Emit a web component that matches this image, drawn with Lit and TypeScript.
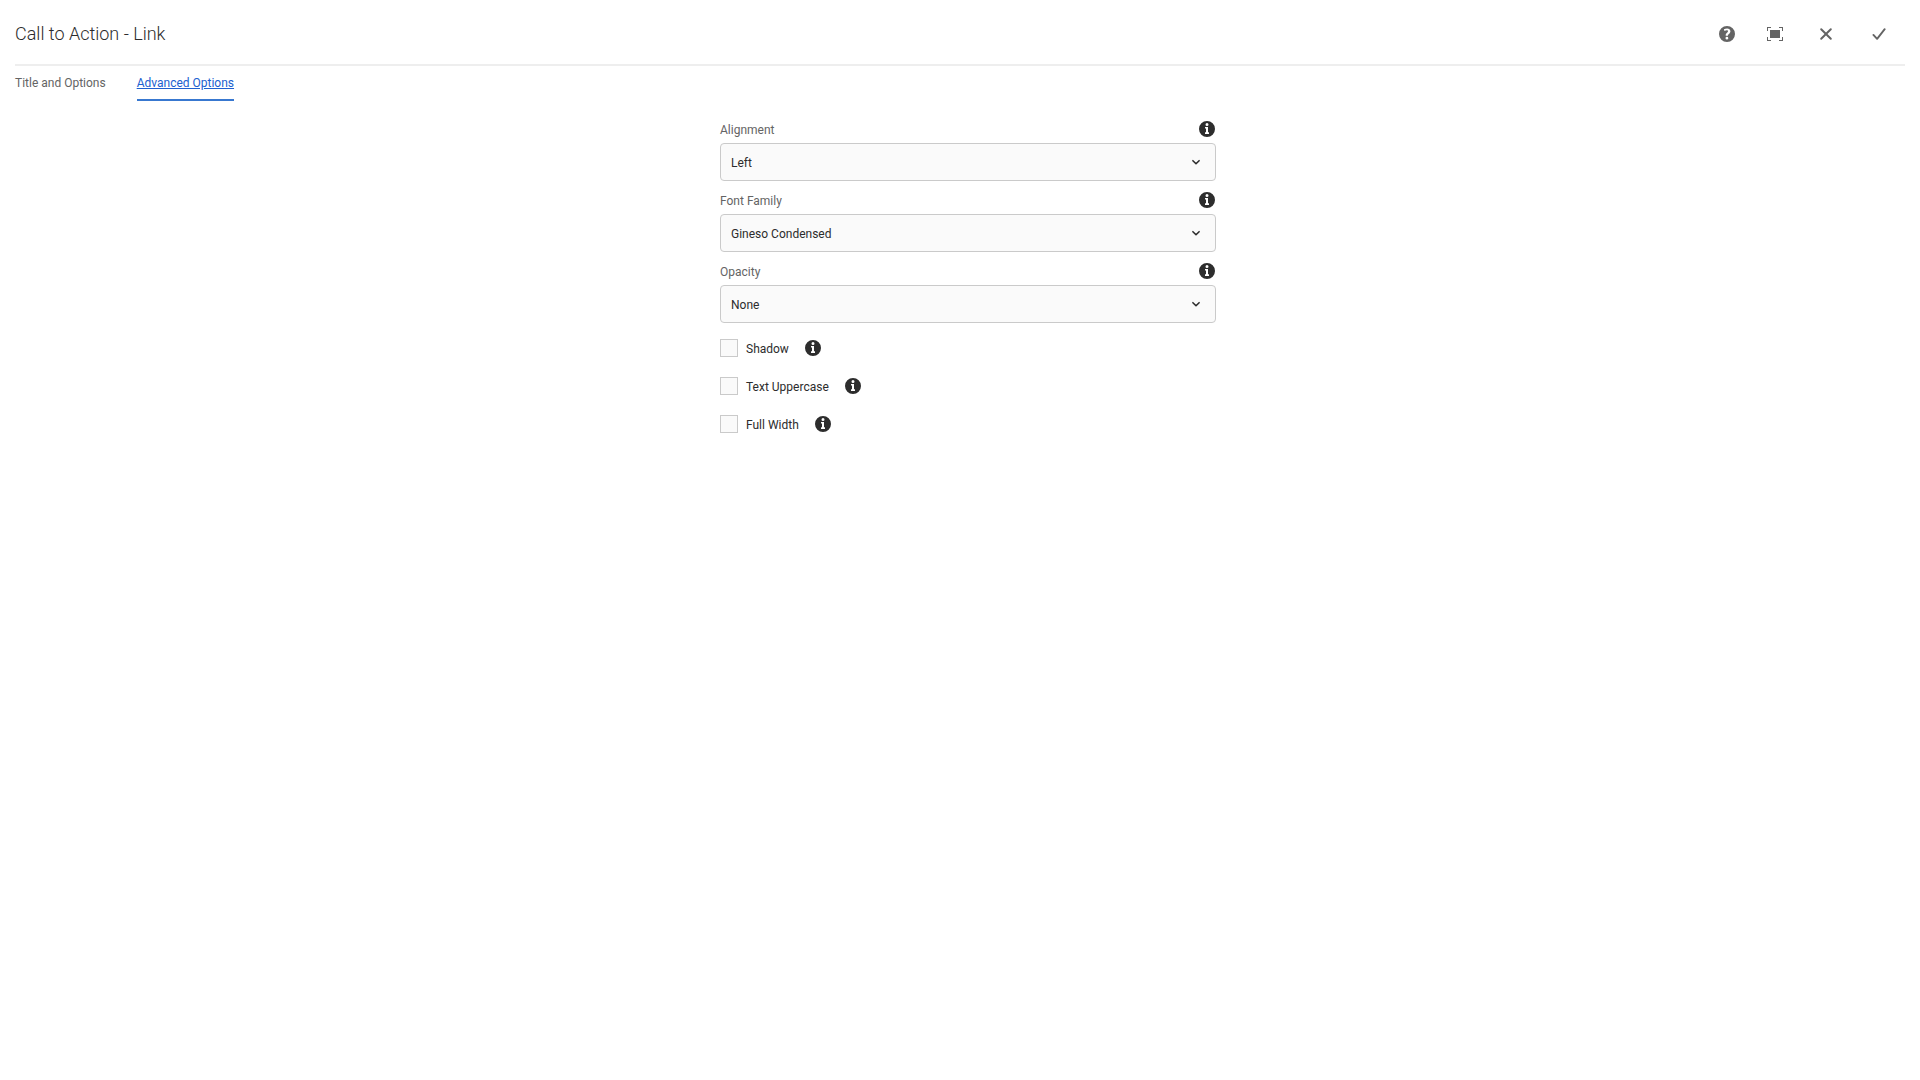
import { LitElement, html, css, svg } from "lit";
import { customElement } from "lit/decorators.js";

interface SelectField {
  id: string;
  label: string;
  options: string[];
}

const SELECTS: SelectField[] = [
  { id: "alignment", label: "Alignment", options: ["Left"] },
  { id: "font-family", label: "Font Family", options: ["Gineso Condensed"] },
  { id: "opacity", label: "Opacity", options: ["None"] },
];

const CHECKS = [
  { id: "shadow", label: "Shadow" },
  { id: "uppercase", label: "Text Uppercase" },
  { id: "full-width", label: "Full Width" },
];

const ICONS = {
  help: svg`<path fill-rule="evenodd" d="M8 0a8 8 0 1 0 0 16A8 8 0 0 0 8 0zM4.9 3.3C5.8 2.8 6.9 2.4 8.1 2.4c2 0 3.3 1.1 3.3 2.8 0 1.3-.7 2-1.5 2.7-.7.6-1 .9-1 1.5v.4H6.7v-.6c0-1.2.6-1.8 1.3-2.4.7-.6 1-.9 1-1.5 0-.6-.4-1-1.2-1-.8 0-1.5.3-2.3.8zM7.9 10.8a1.4 1.4 0 1 1 0 2.8 1.4 1.4 0 0 1 0-2.8z"/>`,
  fullscreen: svg`<path d="M3 4h10v8H3zM0 1h4v1H1v3H0zM12 1h4v4h-1V2h-3zM0 11h1v3h3v1H0zM15 11h1v4h-4v-1h3z"/>`,
  close: svg`<path d="M3.2 3.2l9.6 9.6M12.8 3.2l-9.6 9.6" fill="none" stroke="currentColor" stroke-width="2" stroke-linecap="round"/>`,
  check: svg`<path d="M2.4 8.9l3.7 3.9L13.7 3.2" fill="none" stroke="currentColor" stroke-width="1.9" stroke-linecap="round" stroke-linejoin="round"/>`,
  info: svg`<path fill-rule="evenodd" d="M8 0a8 8 0 1 0 0 16A8 8 0 0 0 8 0zM8 2a1.5 1.5 0 1 1 0 3 1.5 1.5 0 0 1 0-3zM6 6h3v5.2h1V13H6v-1.8h1V7.6H6z"/>`,
  chevron: svg`<path d="M4.9 6.7L8 9.7l3.1-3" fill="none" stroke="currentColor" stroke-width="1.6" stroke-linecap="round" stroke-linejoin="round"/>`,
};

const icon = (name: keyof typeof ICONS) =>
  html`<svg class="icon" viewBox="0 0 16 16" aria-hidden="true">${ICONS[name]}</svg>`;

@customElement("app-root")
export class AppRoot extends LitElement {
  static styles = css`
    :host {
      display: block;
      min-height: 100vh;
      background: #fff;
      color: #2c2c2c;
      font: 12px/18px Roboto, "Noto Sans", sans-serif;
    }
    .header {
      display: flex;
      align-items: center;
      justify-content: space-between;
      height: 64px;
      margin: 0 15px;
      border-bottom: 2px solid #eee;
    }
    .title {
      margin: 0;
      padding-top: 4px;
      font-size: 18px;
      line-height: 24px;
      font-weight: 300;
    }
    .actions {
      display: flex;
      padding-top: 4px;
    }
    .action {
      display: flex;
      align-items: center;
      justify-content: center;
      width: 53px;
      height: 32px;
      padding: 0;
      border: 0;
      background: none;
      color: #646464;
    }
    .action.narrow {
      width: 48px;
    }
    .icon {
      display: block;
      width: 16px;
      height: 16px;
      fill: currentColor;
    }
    .tabs {
      display: flex;
      gap: 31px;
      margin: 0 15px;
    }
    .tab {
      padding: 8px 0 7px;
      border-bottom: 2px solid transparent;
      color: #646464;
      text-decoration: none;
    }
    .tab.selected {
      border-color: #3878d0;
      color: #2060d0;
      text-decoration: underline;
    }
    .content {
      display: grid;
      grid-template-columns: minmax(0, 496px);
      justify-content: center;
      padding: 19px 0 24px 16px;
    }
    .field {
      margin-bottom: 10px;
    }
    .field-head {
      display: flex;
      align-items: center;
      justify-content: space-between;
      height: 18px;
      margin-bottom: 5px;
      padding-right: 1px;
      color: #646464;
    }
    .text {
      padding-top: 2px;
    }
    .info {
      display: flex;
      padding: 0;
      border: 0;
      background: none;
      color: #2d2d2d;
    }
    .select-wrap {
      display: grid;
      align-items: center;
    }
    .select-wrap > * {
      grid-area: 1 / 1;
    }
    .select-wrap .icon {
      justify-self: end;
      margin-right: 12px;
      pointer-events: none;
    }
    .select {
      appearance: none;
      width: 100%;
      height: 38px;
      margin: 0;
      padding: 2px 32px 0 10px;
      border: 1px solid #cacaca;
      border-radius: 4px;
      background: #fafafa;
      color: inherit;
      font: inherit;
    }
    .checks {
      display: grid;
      gap: 20px;
      padding-top: 6px;
    }
    .check-row {
      display: flex;
      align-items: center;
      gap: 16px;
      height: 18px;
    }
    .check {
      display: flex;
      align-items: center;
      gap: 8px;
      height: 18px;
    }
    .box {
      appearance: none;
      width: 18px;
      height: 18px;
      margin: 0;
      border: 1px solid #cacaca;
      background: #fafafa;
    }
    .box:checked {
      background: #3878d0;
    }
  `;

  render() {
    return html`
      <header class="header">
        <h1 class="title">Call to Action - Link</h1>
        <div class="actions">
          <button class="action narrow" aria-label="Help">${icon("help")}</button>
          <button class="action narrow" aria-label="Toggle fullscreen">${icon("fullscreen")}</button>
          <button class="action" aria-label="Cancel">${icon("close")}</button>
          <button class="action" aria-label="Done">${icon("check")}</button>
        </div>
      </header>
      <nav class="tabs">
        <a class="tab" href="#title">Title and Options</a>
        <a class="tab selected" href="#advanced" aria-current="page">Advanced Options</a>
      </nav>
      <main class="content">
        ${SELECTS.map(
          (f) => html`
            <div class="field">
              <div class="field-head">
                <label class="text" for=${f.id}>${f.label}</label>
                <button class="info" aria-label="About ${f.label}">${icon("info")}</button>
              </div>
              <div class="select-wrap">
                <select class="select" id=${f.id}>
                  ${f.options.map((o) => html`<option>${o}</option>`)}
                </select>
                ${icon("chevron")}
              </div>
            </div>
          `
        )}
        <div class="checks">
          ${CHECKS.map(
            (c) => html`
              <div class="check-row">
                <label class="check" for=${c.id}>
                  <input class="box" type="checkbox" id=${c.id} />
                  <span class="text">${c.label}</span>
                </label>
                <button class="info" aria-label="About ${c.label}">${icon("info")}</button>
              </div>
            `
          )}
        </div>
      </main>
    `;
  }
}
